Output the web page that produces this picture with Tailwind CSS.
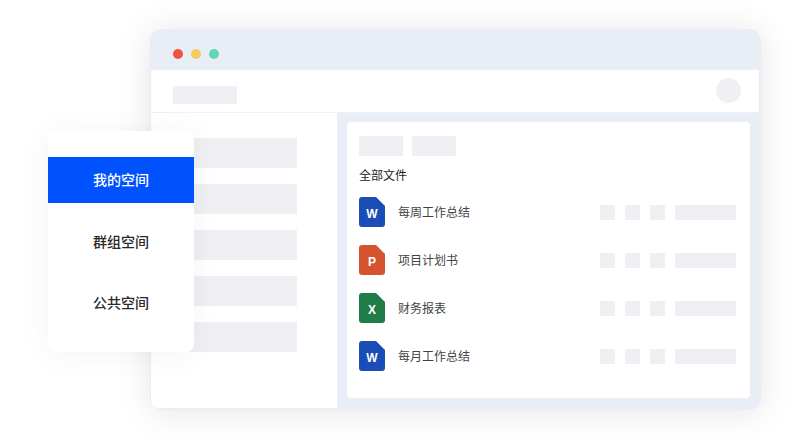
<!DOCTYPE html>
<html lang="en">
<head>
  <meta charset="UTF-8">
  <meta name="viewport" content="width=device-width, initial-scale=1">
  <title>我的空间</title>
  <script src="https://cdn.jsdelivr.net/npm/@tailwindcss/browser@4"></script>
</head>
<body class="bg-white font-['Liberation_Sans','Noto_Sans_CJK_SC',sans-serif]">
  <div class="relative w-[791px] h-[440px] overflow-hidden pt-[29px] pl-[150px]">

    <!-- window -->
    <div class="w-[611px] h-[381px] rounded-xl bg-[#e9eef6] shadow-[0_2px_34px_rgba(0,0,0,0.11)] pl-px pr-[2px] pb-[2px] flex flex-col">
      <div class="h-[41px] shrink-0 flex items-center gap-2 pl-[22px] pt-[9px]">
        <span class="w-[10px] h-[10px] rounded-full bg-[#ee5440]"></span>
        <span class="w-[10px] h-[10px] rounded-full bg-[#f4cb5f]"></span>
        <span class="w-[10px] h-[10px] rounded-full bg-[#5fd9b5]"></span>
      </div>

      <div class="h-[43px] shrink-0 bg-white border-b border-[#f0f1f5] flex items-center justify-between pl-[22px] pr-[18px]">
        <div class="w-16 h-[18px] mt-[8px] bg-[#f0f0f4]"></div>
        <div class="w-[25px] h-[25px] mb-[1px] rounded-full bg-[#f0f0f4]"></div>
      </div>

      <div class="flex-1 flex min-h-0">
        <div class="w-[186px] shrink-0 bg-white rounded-bl-lg pl-[22px] pt-[25px] flex flex-col gap-4">
          <div class="w-[124px] h-[30px] bg-[#f0f0f4]"></div>
          <div class="w-[124px] h-[30px] bg-[#f0f0f4]"></div>
          <div class="w-[124px] h-[30px] bg-[#f0f0f4]"></div>
          <div class="w-[124px] h-[30px] bg-[#f0f0f4]"></div>
          <div class="w-[124px] h-[30px] bg-[#f0f0f4]"></div>
        </div>

        <!-- files -->
        <div class="ml-[10px] mt-[9px] mb-[10px] w-[403px] bg-white rounded-sm px-3 pt-[14px]">
          <div class="flex gap-[9px]">
            <div class="w-11 h-5 bg-[#f0f0f4]"></div>
            <div class="w-11 h-5 bg-[#f0f0f4]"></div>
          </div>
          <div class="mt-[11px] text-xs leading-[18px] text-[#222]">全部文件</div>

          <div class="mt-[3px] flex flex-col">
            <div class="h-12 flex items-center">
              <div class="relative w-[26px] h-[30px]">
                <svg width="26" height="30" viewBox="0 0 26 30"><path d="M3 0H17L26 9V27a3 3 0 0 1-3 3H3a3 3 0 0 1-3-3V3a3 3 0 0 1 3-3Z" fill="#1a4db5"/></svg>
                <span class="absolute inset-x-0 top-[9px] text-center text-xs leading-[16px] font-bold text-white">W</span>
              </div>
              <span class="ml-[13px] w-[202px] text-xs text-[#444] pt-[1px]">每周工作总结</span>
              <div class="w-[15px] h-[15px] bg-[#f0f0f4]"></div>
              <div class="ml-[10px] w-[15px] h-[15px] bg-[#f0f0f4]"></div>
              <div class="ml-[10px] w-[15px] h-[15px] bg-[#f0f0f4]"></div>
              <div class="ml-[10px] w-[61px] h-[15px] bg-[#f0f0f4]"></div>
            </div>
            <div class="h-12 flex items-center">
              <div class="relative w-[26px] h-[30px]">
                <svg width="26" height="30" viewBox="0 0 26 30"><path d="M3 0H17L26 9V27a3 3 0 0 1-3 3H3a3 3 0 0 1-3-3V3a3 3 0 0 1 3-3Z" fill="#d6532f"/></svg>
                <span class="absolute inset-x-0 top-[9px] text-center text-xs leading-[16px] font-bold text-white">P</span>
              </div>
              <span class="ml-[13px] w-[202px] text-xs text-[#444] pt-[1px]">项目计划书</span>
              <div class="w-[15px] h-[15px] bg-[#f0f0f4]"></div>
              <div class="ml-[10px] w-[15px] h-[15px] bg-[#f0f0f4]"></div>
              <div class="ml-[10px] w-[15px] h-[15px] bg-[#f0f0f4]"></div>
              <div class="ml-[10px] w-[61px] h-[15px] bg-[#f0f0f4]"></div>
            </div>
            <div class="h-12 flex items-center">
              <div class="relative w-[26px] h-[30px]">
                <svg width="26" height="30" viewBox="0 0 26 30"><path d="M3 0H17L26 9V27a3 3 0 0 1-3 3H3a3 3 0 0 1-3-3V3a3 3 0 0 1 3-3Z" fill="#217d47"/></svg>
                <span class="absolute inset-x-0 top-[9px] text-center text-xs leading-[16px] font-bold text-white">X</span>
              </div>
              <span class="ml-[13px] w-[202px] text-xs text-[#444] pt-[1px]">财务报表</span>
              <div class="w-[15px] h-[15px] bg-[#f0f0f4]"></div>
              <div class="ml-[10px] w-[15px] h-[15px] bg-[#f0f0f4]"></div>
              <div class="ml-[10px] w-[15px] h-[15px] bg-[#f0f0f4]"></div>
              <div class="ml-[10px] w-[61px] h-[15px] bg-[#f0f0f4]"></div>
            </div>
            <div class="h-12 flex items-center">
              <div class="relative w-[26px] h-[30px]">
                <svg width="26" height="30" viewBox="0 0 26 30"><path d="M3 0H17L26 9V27a3 3 0 0 1-3 3H3a3 3 0 0 1-3-3V3a3 3 0 0 1 3-3Z" fill="#1a4db5"/></svg>
                <span class="absolute inset-x-0 top-[9px] text-center text-xs leading-[16px] font-bold text-white">W</span>
              </div>
              <span class="ml-[13px] w-[202px] text-xs text-[#444] pt-[1px]">每月工作总结</span>
              <div class="w-[15px] h-[15px] bg-[#f0f0f4]"></div>
              <div class="ml-[10px] w-[15px] h-[15px] bg-[#f0f0f4]"></div>
              <div class="ml-[10px] w-[15px] h-[15px] bg-[#f0f0f4]"></div>
              <div class="ml-[10px] w-[61px] h-[15px] bg-[#f0f0f4]"></div>
            </div>
          </div>
        </div>
      </div>
    </div>

    <!-- floating menu -->
    <div class="absolute left-[48px] top-[131px] w-[146px] h-[221px] rounded-lg bg-white shadow-[0_2px_30px_rgba(0,0,0,0.05)] pt-[26px] overflow-hidden text-sm font-medium text-[#2a2a2a] text-center">
      <div class="h-[46px] leading-[46px] bg-[#0052ff] text-white">我的空间</div>
      <div class="h-[78px] leading-[78px]">群组空间</div>
      <div class="h-[44px] leading-[44px]">公共空间</div>
    </div>
  </div>
</body>
</html>
